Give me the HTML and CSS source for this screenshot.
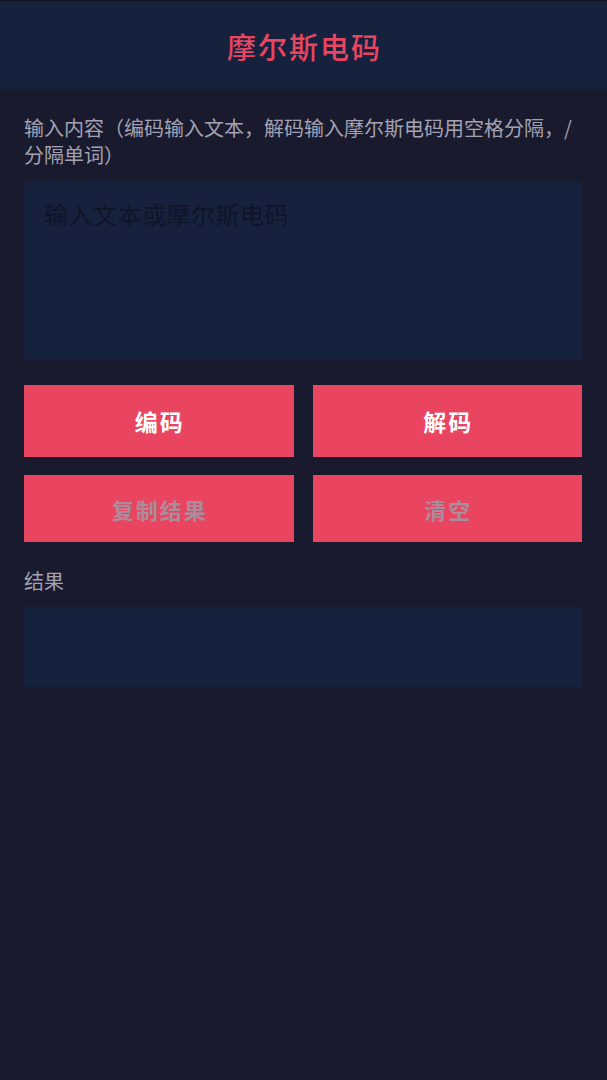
FILE: index.html
```html
<!DOCTYPE html>
<html lang="zh-CN">
<head>
<meta charset="utf-8">
<title>摩尔斯电码</title>
<link rel="stylesheet" href="styles.css">
</head>
<body>
<header class="app-header">
  <h1 class="app-title">摩尔斯电码</h1>
</header>
<main class="content">
  <label class="field-label" for="input">输入内容（编码输入文本，解码输入摩尔斯电码用空格分隔，/分隔单词）</label>
  <textarea id="input" class="input-area" placeholder="输入文本或摩尔斯电码"></textarea>
  <div class="actions">
    <button class="btn btn-primary">编码</button>
    <button class="btn btn-primary">解码</button>
    <button class="btn btn-secondary">复制结果</button>
    <button class="btn btn-secondary">清空</button>
  </div>
  <div class="field-label result-label">结果</div>
  <div class="result-box"></div>
</main>
</body>
</html>
```

FILE: styles.css
```css
* { box-sizing: border-box; }
html, body { margin: 0; padding: 0; }
body {
  background: #1a1a2e;
  font-family: "Noto Sans CJK SC", "Noto Sans", sans-serif;
  min-height: 1080px;
}
.app-header {
  height: 89px;
  background: #16213e;
  border-top: 1px solid #0e1122;
  display: flex;
  align-items: center;
  justify-content: center;
}
.app-title {
  margin: 0;
  color: #e94560;
  font-size: 29px;
  font-weight: 500;
  letter-spacing: 2px;
  line-height: 1;
  padding: 2px 0 0 2px;
}
.content {
  padding: 25px 25px 0 24px;
  display: flex;
  flex-direction: column;
}
.field-label {
  display: block;
  color: #a2a2b2;
  font-size: 20px;
  line-height: 27px;
}
.input-area {
  margin-top: 13px;
  height: 179px;
  width: 100%;
  background: #16213e;
  border: none;
  outline: none;
  resize: none;
  padding: 16px 20px;
  font-family: inherit;
  font-size: 24px;
  letter-spacing: 0.5px;
  line-height: 34px;
  color: #ffffff;
  display: block;
}
.input-area::placeholder {
  color: #0f1427;
  opacity: 1;
}
.actions {
  margin-top: 25px;
  display: grid;
  grid-template-columns: 1fr 1fr;
  grid-template-rows: 72px 67px;
  column-gap: 19px;
  row-gap: 18px;
}
.btn {
  border: none;
  background: #e94560;
  font-family: inherit;
  font-weight: 700;
  font-size: 22px;
  letter-spacing: 2px;
  padding: 0 0 0 2px;
  cursor: pointer;
}
.btn-primary { color: #ffffff; font-size: 23px; }
.btn-secondary { color: #ab8c9c; font-weight: 600; }
.result-label { margin-top: 25px; }
.result-box {
  margin-top: 13px;
  height: 80px;
  background: #16213e;
}
```
